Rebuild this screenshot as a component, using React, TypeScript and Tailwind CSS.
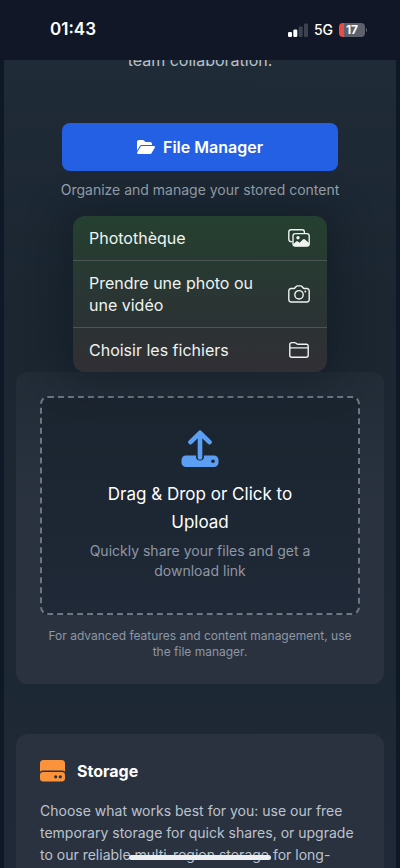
import React from "react";
import { FaFolderOpen } from "react-icons/fa6";

function SignalIcon() {
  return (
    <svg width="20" height="14" viewBox="0 0 20 14" aria-hidden="true">
      <rect x="0" y="9" width="4" height="5" rx="1.3" fill="#fff" />
      <rect x="5.300" y="6.500" width="4" height="7.500" rx="1.3" fill="#fff" />
      <rect x="10.700" y="3.500" width="4" height="10.500" rx="1.3" fill="#3c424f" />
      <rect x="16" y="0.500" width="4" height="13.500" rx="1.3" fill="#3c424f" />
    </svg>
  );
}

function PhotosIcon() {
  return (
    <svg width="22" height="18" viewBox="0 0 22 18" fill="none" aria-hidden="true">
      <path
        d="M4.2 12.6H3a2.2 2.2 0 0 1-2.2-2.2V3A2.2 2.2 0 0 1 3 .8h11.2A2.2 2.2 0 0 1 16.400 3v1"
        stroke="currentColor"
        strokeWidth="1.4"
      />
      <rect x="5" y="4.600" width="16.200" height="12.400" rx="2.2" stroke="currentColor" strokeWidth="1.4" />
      <circle cx="10" cy="8.800" r="1.700" fill="currentColor" />
      <path
        d="M5 15.200l3.200-2.700c.6-.5 1.200-.5 1.800 0l1.500 1.200 3.400-3.300c.7-.7 1.500-.7 2.200 0l4.100 3.900v.7a2.200 2.200 0 0 1-2.200 2.200H7.200A2.200 2.200 0 0 1 5 15.200z"
        fill="currentColor"
      />
    </svg>
  );
}

function CameraIcon() {
  return (
    <svg width="22" height="18" viewBox="0 0 22 18" fill="none" stroke="currentColor" strokeWidth="1.4" aria-hidden="true">
      <path
        d="M3 3.500h2.700c.7 0 1-.2 1.400-.7l.8-1c.5-.6.9-.9 1.700-.9h2.900c.8 0 1.200.3 1.700.9l.8 1c.4.5.7.7 1.400.7H19a2.200 2.200 0 0 1 2.200 2.200v9.100A2.200 2.200 0 0 1 19 17H3a2.200 2.200 0 0 1-2.200-2.200V5.700A2.200 2.200 0 0 1 3 3.500z"
        strokeLinejoin="round"
      />
      <circle cx="11" cy="9.800" r="4.200" />
      <circle cx="17.300" cy="6.600" r="1" fill="currentColor" stroke="none" />
    </svg>
  );
}

function FolderIcon() {
  return (
    <svg width="22" height="18" viewBox="0 0 22 18" fill="none" stroke="currentColor" strokeWidth="1.4" aria-hidden="true">
      <path
        d="M1.800 14.200V3.600a2 2 0 0 1 2-2h2.700c.7 0 1.100.2 1.600.6l.6.5c.4.4.8.5 1.400.5h8.100a2 2 0 0 1 2 2v9a2 2 0 0 1-2 2H3.800a2 2 0 0 1-2-2z"
        strokeLinejoin="round"
      />
      <path d="M1.800 6.900h18.400" />
    </svg>
  );
}

function UploadIcon() {
  return (
    <svg width="38" height="38" viewBox="0 0 38 38" aria-hidden="true">
      <rect x="0.500" y="25.500" width="37" height="11.500" rx="4.500" fill="#5b9ff5" />
      <path d="M19 3v23.500" stroke="#1d2733" strokeWidth="8" strokeLinecap="round" />
      <path
        d="M19 3v24.500M9.500 12.200L19 2.800l9.500 9.400"
        fill="none"
        stroke="#5b9ff5"
        strokeWidth="4.600"
        strokeLinecap="round"
        strokeLinejoin="round"
      />
      <circle cx="32" cy="31.300" r="1.800" fill="#1d2733" />
    </svg>
  );
}

function DriveIcon() {
  return (
    <svg width="25" height="22" viewBox="0 0 25 22" fill="#fb923c" aria-hidden="true">
      <path d="M3.500 0h18A3.500 3.500 0 0 1 25 3.500v8.200a4.500 4.500 0 0 0-3.500-1.200h-18A4.500 4.500 0 0 0 0 11.700V3.500A3.500 3.500 0 0 1 3.500 0z" />
      <rect x="0" y="12" width="25" height="9.500" rx="3.300" />
      <circle cx="15.700" cy="16.800" r="1.600" fill="#2a3240" />
      <circle cx="20.300" cy="16.800" r="1.600" fill="#2a3240" />
    </svg>
  );
}

const menuItems = [
  { label: "Photothèque", icon: <PhotosIcon /> },
  { label: "Prendre une photo ou une vidéo", icon: <CameraIcon /> },
  { label: "Choisir les fichiers", icon: <FolderIcon /> },
];

function SourceMenu() {
  return (
    <div
      role="menu"
      className="absolute bottom-full left-1/2 w-[254px] -translate-x-1/2 divide-y divide-[#4b5552] overflow-hidden rounded-xl bg-linear-to-b from-[#24402f] via-[#2b3334] via-65% to-[#302f35] shadow-[0_0_36px_10px_rgba(10,20,30,0.4)]"
    >
      {menuItems.map((item) => (
        <button
          key={item.label}
          type="button"
          role="menuitem"
          className="flex w-full items-center justify-between py-[11px] pr-[17px] pl-4 text-left text-base leading-[22px] text-[#eef3f0]"
        >
          <span className="w-[180px]">{item.label}</span>
          {item.icon}
        </button>
      ))}
    </div>
  );
}

export default function App() {
  return (
    <div className="relative flex h-screen flex-col overflow-hidden bg-[#0f1826] font-['Inter','Liberation_Sans',sans-serif]">
      <header className="flex h-[60px] shrink-0 items-center justify-between bg-[#111726] pr-[33px] pl-[50px] text-white">
        <time className="text-[17px] font-semibold">01:43</time>
        <div className="flex items-center gap-1.5">
          <SignalIcon />
          <span className="text-sm font-medium">5G</span>
          <div className="flex items-center gap-px">
            <span className="flex h-[14px] w-[26px] items-center justify-center rounded bg-linear-to-r from-[#eb4b42] from-20% to-[#5c616c] to-20% text-xs font-bold">
              17
            </span>
            <span className="h-1 w-px rounded-r bg-[#5c616c]" />
          </div>
        </div>
      </header>

      <main className="mx-1 flex-1 overflow-hidden bg-linear-to-b from-[#1f2b37] via-[#1b2631] via-30% to-[#1f2937] px-3">
        <div className="flex h-3 items-end justify-center overflow-hidden">
          <p className="text-base leading-6 text-[#b9c0ca]">team collaboration.</p>
        </div>

        <section className="mx-auto mt-[51px] flex w-[276px] flex-col items-center gap-[9px] text-center">
          <button
            type="button"
            className="flex h-12 w-full items-center justify-center gap-2 rounded-lg bg-[#2460e4] text-base font-semibold text-white"
          >
            <FaFolderOpen className="size-[18px]" aria-hidden="true" />
            File Manager
          </button>
          <p className="text-sm whitespace-nowrap text-[#9ca5b0]">Organize and manage your stored content</p>
        </section>

        <section className="relative mt-[172px] rounded-xl bg-linear-to-b from-[#212c37] to-[#2a3240] to-45% p-6">
          <SourceMenu />
          <button
            type="button"
            className="flex w-full flex-col items-center rounded-lg border-2 border-dashed border-[#6d7682] bg-linear-to-b from-[#1b2530] to-[#1f2937] px-10 py-8 text-center"
          >
            <UploadIcon />
            <span className="mt-3 text-[17px] leading-7 text-white">Drag &amp; Drop or Click to Upload</span>
            <span className="mt-[5px] text-sm text-[#8e97a4]">Quickly share your files and get a download link</span>
          </button>
          <p className="mt-[13px] text-center text-xs text-[#8e97a4]">
            For advanced features and content management, use the file manager.
          </p>
        </section>

        <section className="mt-[50px] rounded-xl bg-[#2a3240] p-6">
          <div className="flex h-[26px] items-center gap-3">
            <DriveIcon />
            <h2 className="text-base font-bold text-white">Storage</h2>
          </div>
          <p className="mt-4 text-sm leading-[22px] text-[#bcc3ce]">
            Choose what works best for you: use our free temporary storage for quick shares, or upgrade to our
            reliable multi-region storage for long-
          </p>
        </section>
      </main>

      <div className="absolute bottom-2 left-1/2 h-[5px] w-[142px] -translate-x-1/2 rounded-full bg-[#eceef1]" />
    </div>
  );
}
